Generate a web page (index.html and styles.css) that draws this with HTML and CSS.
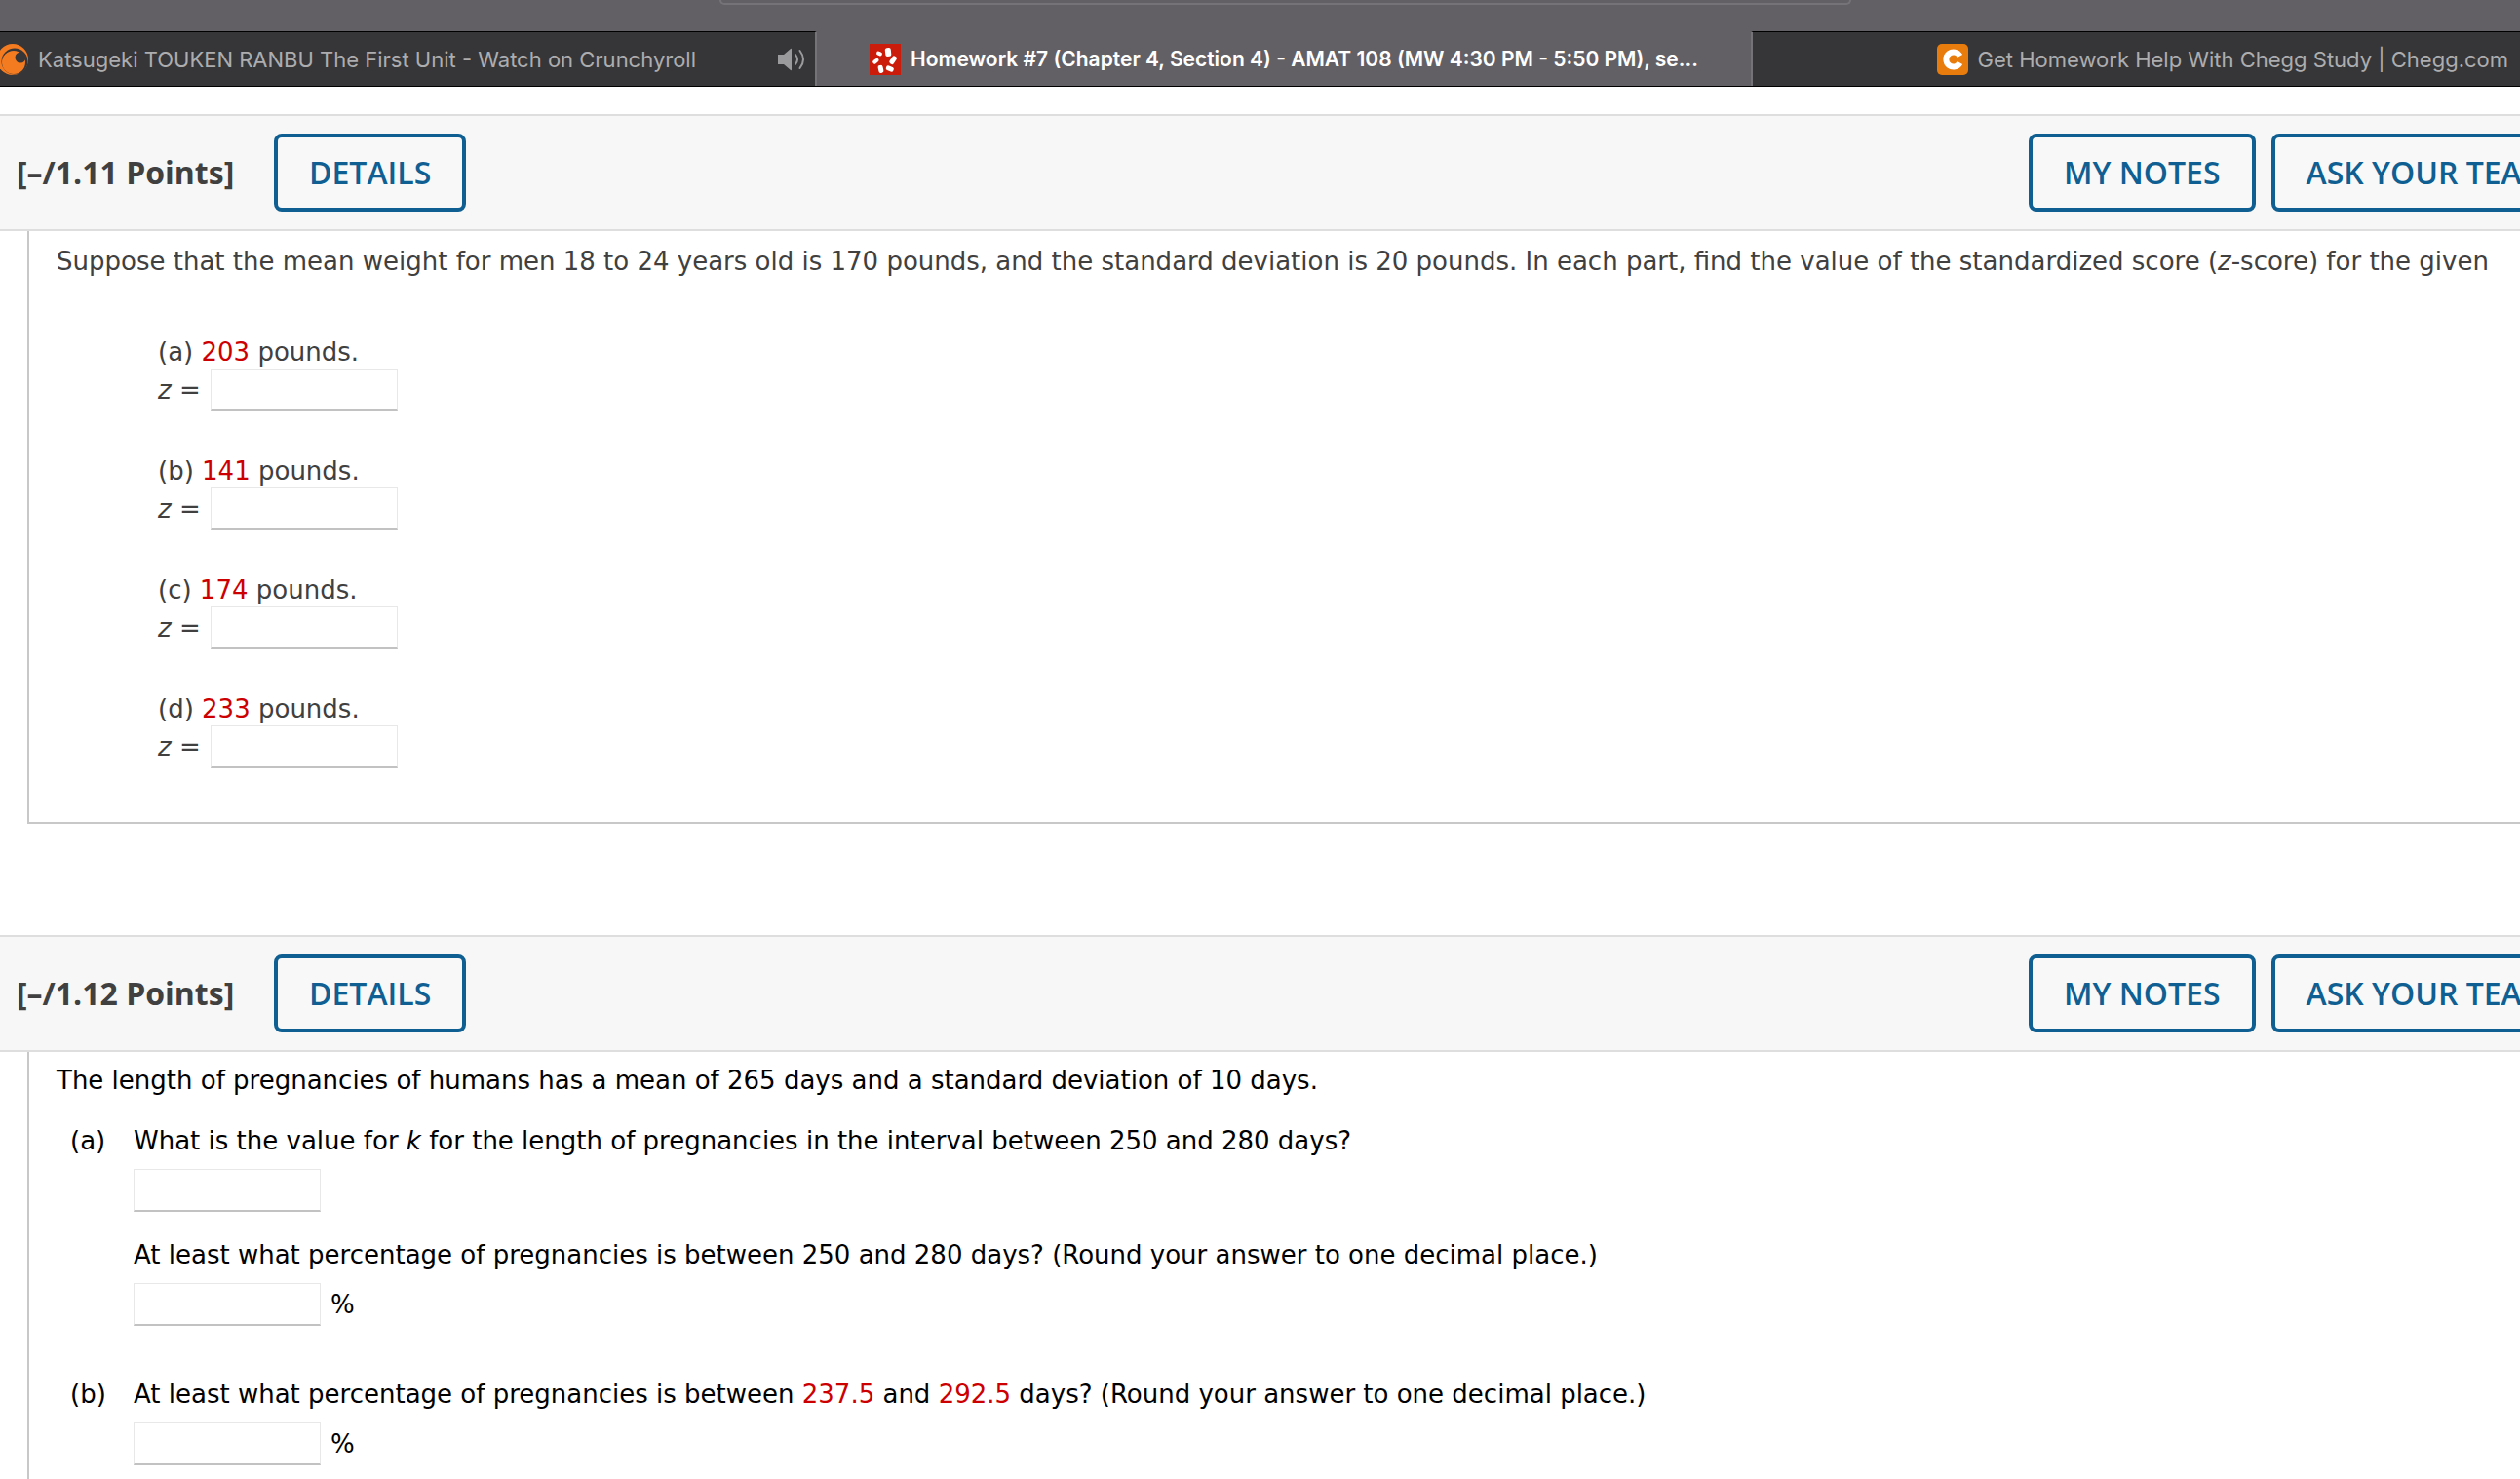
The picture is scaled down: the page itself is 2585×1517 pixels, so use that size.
FILE: index.html
```html
<!DOCTYPE html>
<html lang="en">
<head>
<meta charset="utf-8">
<title>Homework #7 (Chapter 4, Section 4) - AMAT 108</title>
<link rel="stylesheet" href="styles.css">
</head>
<body>
<header class="chrome">
  <div class="toolbar"><div class="address"></div></div>
  <nav class="tabs" aria-label="Open tabs">
    <a class="tab tab-first" href="#">
      <svg class="favicon" viewBox="0 0 32 32" aria-hidden="true">
        <circle cx="16" cy="16" r="16" fill="#f47b20"/>
        <circle cx="18" cy="18" r="13.500" fill="#363638"/>
        <circle cx="17" cy="19" r="12" fill="#f47b20"/>
        <circle cx="24" cy="14" r="5.500" fill="#363638"/>
      </svg>
      <span class="tab-title">Katsugeki TOUKEN RANBU The First Unit - Watch on Crunchyroll</span>
      <svg class="audio" viewBox="0 0 28 24" aria-hidden="true">
        <path d="M0 7h6l7-6q1-1 1 1v20q0 2-1 1l-7-6H0z" fill="#9b9b9d"/>
        <path d="M18 7q4 5 0 10M22.500 3q7 9 0 18" fill="none" stroke="#9b9b9d" stroke-width="2" stroke-linecap="round"/>
      </svg>
    </a>
    <a class="tab tab-active" href="#">
      <svg class="favicon" viewBox="0 0 32 32" aria-hidden="true">
        <rect width="32" height="32" fill="#cb1c0b"/>
        <g fill="#fff">
          <rect x="16" y="4" width="6" height="9" rx="2" transform="rotate(-6 19 8)"/>
          <rect x="22" y="12" width="5" height="9" rx="2" transform="rotate(35 24 16)"/>
          <rect x="17" y="23" width="8" height="5" rx="2" transform="rotate(22 21 25)"/>
          <rect x="9" y="22" width="5" height="8" rx="2" transform="rotate(-12 11 26)"/>
          <rect x="3" y="16" width="7" height="4" rx="2" transform="rotate(-38 6 18)"/>
          <rect x="7" y="8" width="6" height="4" rx="2" transform="rotate(20 10 10)"/>
        </g>
      </svg>
      <span class="tab-title">Homework #7 (Chapter 4, Section 4) - AMAT 108 (MW 4:30 PM - 5:50 PM), se...</span>
    </a>
    <a class="tab tab-last" href="#">
      <svg class="favicon" viewBox="0 0 32 32" aria-hidden="true">
        <rect width="32" height="32" rx="5" fill="#e87c0c"/>
        <path d="M23.500 12.500A7.500 7.500 0 1 0 23.500 19.500" fill="none" stroke="#fff" stroke-width="6"/>
      </svg>
      <span class="tab-title">Get Homework Help With Chegg Study | Chegg.com</span>
    </a>
  </nav>
</header>
<main>
  <section class="question question-plain">
    <header class="question-bar">
      <h2 class="points">[–/1.11 Points]</h2>
      <button class="btn" type="button">DETAILS</button>
      <div class="actions">
        <button class="btn" type="button">MY NOTES</button>
        <button class="btn" type="button">ASK YOUR TEACHER</button>
      </div>
    </header>
    <div class="question-body">
      <p class="prompt">Suppose that the mean weight for men 18 to 24 years old is 170 pounds, and the standard deviation is 20 pounds. In each part, find the value of the standardized score (<i>z</i>-score) for the given</p>
      <div class="parts">
        <div class="part"><p>(a) <span class="num">203</span> pounds.</p><div class="answer"><label for="z-a"><i>z</i> =</label><input id="z-a" type="text"></div></div>
        <div class="part"><p>(b) <span class="num">141</span> pounds.</p><div class="answer"><label for="z-b"><i>z</i> =</label><input id="z-b" type="text"></div></div>
        <div class="part"><p>(c) <span class="num">174</span> pounds.</p><div class="answer"><label for="z-c"><i>z</i> =</label><input id="z-c" type="text"></div></div>
        <div class="part"><p>(d) <span class="num">233</span> pounds.</p><div class="answer"><label for="z-d"><i>z</i> =</label><input id="z-d" type="text"></div></div>
      </div>
    </div>
  </section>
  <section class="question question-list">
    <header class="question-bar">
      <h2 class="points">[–/1.12 Points]</h2>
      <button class="btn" type="button">DETAILS</button>
      <div class="actions">
        <button class="btn" type="button">MY NOTES</button>
        <button class="btn" type="button">ASK YOUR TEACHER</button>
      </div>
    </header>
    <div class="question-body">
      <p class="prompt">The length of pregnancies of humans has a mean of 265 days and a standard deviation of 10 days.</p>
      <div class="item">
        <span>(a)</span>
        <div class="item-content">
          <div class="field">
            <label for="k">What is the value for <i>k</i> for the length of pregnancies in the interval between 250 and 280 days?</label>
            <div class="answer"><input id="k" type="text"></div>
          </div>
          <div class="field">
            <label for="pct-a">At least what percentage of pregnancies is between 250 and 280 days? (Round your answer to one decimal place.)</label>
            <div class="answer"><input id="pct-a" type="text"><span>%</span></div>
          </div>
        </div>
      </div>
      <div class="item">
        <span>(b)</span>
        <div class="item-content">
          <div class="field">
            <label for="pct-b">At least what percentage of pregnancies is between <span class="num">237.5</span> and <span class="num">292.5</span> days? (Round your answer to one decimal place.)</label>
            <div class="answer"><input id="pct-b" type="text"><span>%</span></div>
          </div>
        </div>
      </div>
    </div>
  </section>
</main>
</body>
</html>
```
FILE: styles.css
```css
* { box-sizing: border-box; }
html { overflow: hidden; }
body {
  margin: 0;
  overflow: hidden;
  background: #fff;
  color: #404040;
  font-family: Verdana, "DejaVu Sans", sans-serif;
  font-size: 26px;
  line-height: 40px;
}
p, h2 { margin: 0; }

/* Browser toolbar and tabs */
.chrome {
  background: #636065;
  border-bottom: 1px solid #000;
  font-family: Inter, sans-serif;
  font-size: 22px;
  line-height: 32px;
}
.toolbar { height: 32px; padding: 0 686px 0 738px; }
.address {
  height: 5px;
  border: 2px solid #757378;
  border-top: 0;
  border-radius: 0 0 10px 10px;
}
.tabs { display: grid; grid-template-columns: 838fr 958fr 789fr; }
.tab {
  display: flex;
  align-items: center;
  gap: 10px;
  height: 56px;
  min-width: 0;
  border-top: 1px solid #000;
  background: #363638;
  color: #adadaf;
  text-decoration: none;
  white-space: nowrap;
}
.favicon { flex: none; width: 32px; height: 32px; }
.tab-first { border-right: 2px solid #757378; padding-right: 10px; }
.tab-first .favicon { margin-left: -3px; }
.audio { flex: none; width: 28px; height: 24px; margin-left: auto; }
.tab-active {
  justify-content: center;
  border-top-color: #636065;
  background: #636065;
  color: #fff;
  font-size: 21px;
  font-weight: 600;
}
.tab-last { justify-content: flex-end; border-left: 2px solid #757378; padding-right: 12px; }

/* Questions */
main { padding-top: 28px; }
.question + .question { margin-top: 114px; }
.question-bar {
  display: flex;
  align-items: center;
  height: 120px;
  padding-left: 17px;
  border-top: 2px solid #dedede;
  border-bottom: 2px solid #dedede;
  background: #f7f7f7;
  font-family: "Open Sans", sans-serif;
}
.points { width: 264px; font-size: 32px; font-weight: 700; white-space: nowrap; }
.btn {
  flex: none;
  height: 80px;
  padding: 0 32px;
  border: 4px solid #0f5f92;
  border-radius: 8px;
  background: #f8f8f8;
  color: #0f5f92;
  font: 600 32px/40px "Open Sans", sans-serif;
  white-space: nowrap;
}
.actions { display: flex; gap: 16px; flex: none; width: 504px; margin-left: auto; }
.question-body {
  margin-left: 28px;
  padding-left: 28px;
  border-left: 2px solid #c8c8c8;
}
.question-plain .question-body { padding-top: 11px; padding-bottom: 55px; border-bottom: 2px solid #c8c8c8; }
.question-list .question-body { padding-top: 9px; padding-bottom: 55px; color: #000; }
.prompt { white-space: nowrap; }
.parts { display: grid; gap: 44px; padding: 56px 0 0 104px; }
.part { display: flex; flex-direction: column; line-height: 34px; }
.answer { display: flex; align-items: center; gap: 10px; height: 44px; }
input {
  width: 192px;
  height: 44px;
  padding: 0 8px;
  border: 1px solid #e8e8e8;
  border-bottom: 2px solid #c2c2c2;
  background: #fff;
  font: inherit;
}
.num { color: #c00; }
.item { display: flex; margin-top: 22px; padding-left: 14px; }
.item + .item { margin-top: 50px; }
.item > span { flex: none; width: 65px; }
.item-content { display: grid; gap: 24px; }
.field { display: grid; gap: 9px; }
```
